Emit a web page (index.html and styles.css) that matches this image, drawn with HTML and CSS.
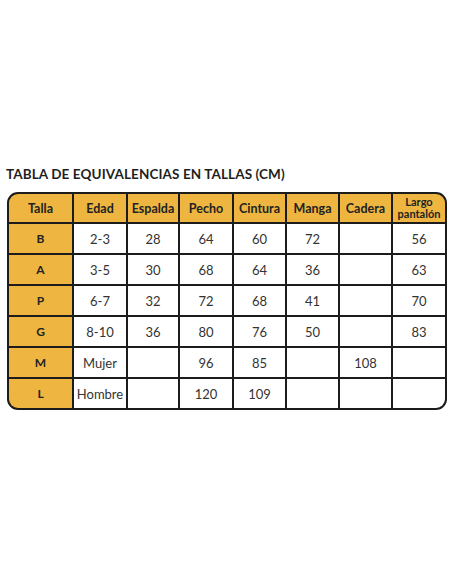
FILE: index.html
```html
<!DOCTYPE html>
<html lang="es">
<head>
<meta charset="utf-8">
<title>Tabla de equivalencias en tallas</title>
<link rel="stylesheet" href="styles.css">
</head>
<body>
<div class="page">
  <h1 class="title">TABLA DE EQUIVALENCIAS EN TALLAS (CM)</h1>
  <div class="grid">
    <div class="cell head">Talla</div>
    <div class="cell head">Edad</div>
    <div class="cell head">Espalda</div>
    <div class="cell head">Pecho</div>
    <div class="cell head">Cintura</div>
    <div class="cell head">Manga</div>
    <div class="cell head">Cadera</div>
    <div class="cell head two"><span>Largo</span><span>pantalón</span></div>

    <div class="cell size">B</div>
    <div class="cell">2-3</div>
    <div class="cell">28</div>
    <div class="cell">64</div>
    <div class="cell">60</div>
    <div class="cell">72</div>
    <div class="cell"></div>
    <div class="cell">56</div>

    <div class="cell size">A</div>
    <div class="cell">3-5</div>
    <div class="cell">30</div>
    <div class="cell">68</div>
    <div class="cell">64</div>
    <div class="cell">36</div>
    <div class="cell"></div>
    <div class="cell">63</div>

    <div class="cell size">P</div>
    <div class="cell">6-7</div>
    <div class="cell">32</div>
    <div class="cell">72</div>
    <div class="cell">68</div>
    <div class="cell">41</div>
    <div class="cell"></div>
    <div class="cell">70</div>

    <div class="cell size">G</div>
    <div class="cell">8-10</div>
    <div class="cell">36</div>
    <div class="cell">80</div>
    <div class="cell">76</div>
    <div class="cell">50</div>
    <div class="cell"></div>
    <div class="cell">83</div>

    <div class="cell size">M</div>
    <div class="cell">Mujer</div>
    <div class="cell"></div>
    <div class="cell">96</div>
    <div class="cell">85</div>
    <div class="cell"></div>
    <div class="cell">108</div>
    <div class="cell"></div>

    <div class="cell size">L</div>
    <div class="cell">Hombre</div>
    <div class="cell"></div>
    <div class="cell">120</div>
    <div class="cell">109</div>
    <div class="cell"></div>
    <div class="cell"></div>
    <div class="cell"></div>
  </div>
</div>
</body>
</html>
```
FILE: styles.css
```css
html, body {
  margin: 0;
  padding: 0;
  background: #ffffff;
}

.page {
  padding-top: 166px;
  padding-left: 7px;
  font-family: "Lato", "Open Sans", sans-serif;
  color: #2b2b2b;
}

.title {
  margin: 0 0 10px -1px;
  font-size: 13.5px;
  font-weight: 700;
  line-height: 16px;
  letter-spacing: 0.1px;
  color: #1f1f1f;
}

.grid {
  display: grid;
  grid-template-columns: 63px 52px 50px 52px 51px 51px 51px 52px;
  grid-template-rows: 28px repeat(6, 29px);
  gap: 2px;
  width: 436px;
  background: #1c1c1c;
  border: 2px solid #1c1c1c;
  border-radius: 11px;
  overflow: hidden;
}

.cell {
  display: flex;
  align-items: center;
  justify-content: center;
  background: #ffffff;
  font-size: 13px;
  color: #333333;
  white-space: nowrap;
}

.head {
  background: #eeb640;
  font-weight: 700;
  font-size: 12.5px;
  color: #222222;
}

.two {
  flex-direction: column;
  font-size: 11px;
  line-height: 12px;
  text-align: center;
}

.size {
  background: #eeb640;
  font-weight: 700;
  font-size: 12px;
  color: #222222;
}
```
